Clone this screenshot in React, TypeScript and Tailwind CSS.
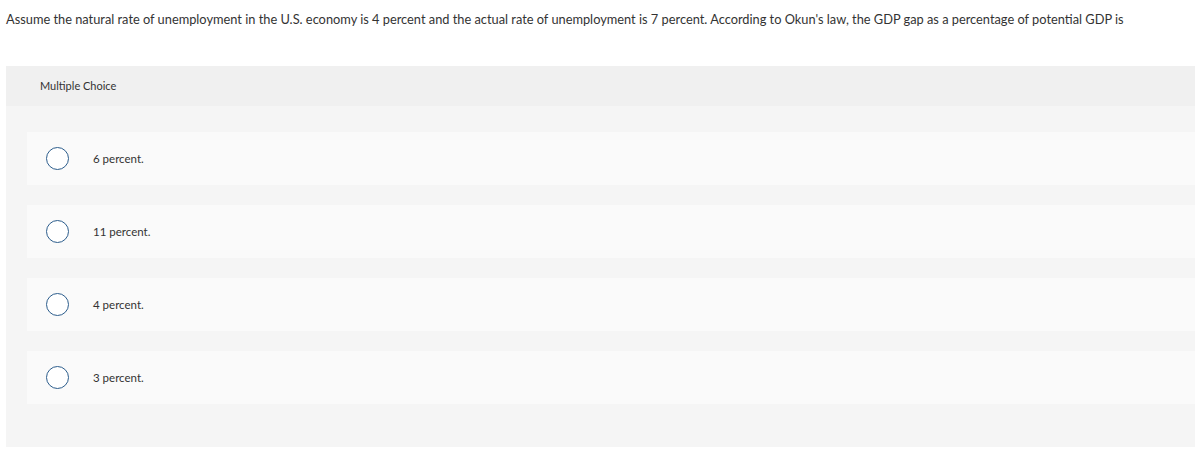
export default function App() {
  const options = ["6 percent.", "11 percent.", "4 percent.", "3 percent."];
  return (
    <div className="w-[1195px] h-[461px] bg-white" style={{ fontFamily: "Lato, 'Open Sans', sans-serif" }}>
      <div className="pl-[6px] pt-[10px] h-[66px] text-[12.8px] text-[#333]">
        Assume the natural rate of unemployment in the U.S. economy is 4 percent and the actual rate of unemployment is 7 percent. According to Okun's law, the GDP gap as a percentage of potential GDP is
      </div>
      <div className="ml-[6px] bg-[#f5f5f5] h-[381px]">
        <div className="h-[40px] bg-[#f0f0f0] flex items-center pl-[34px] text-[11px] text-[#333]">Multiple Choice</div>
        <div className="pl-[21px] pt-[26px] flex flex-col gap-[20px]">
          {options.map((o) => (
            <div key={o} className="h-[53px] bg-[#fafafa] flex items-center">
              <div className="ml-[19px] w-[23px] h-[23px] rounded-full border-[1.5px] border-[#2c5d8c] bg-white"></div>
              <div className="ml-[24px] text-[11.5px] text-[#333]">{o}</div>
            </div>
          ))}
        </div>
      </div>
    </div>
  );
}
